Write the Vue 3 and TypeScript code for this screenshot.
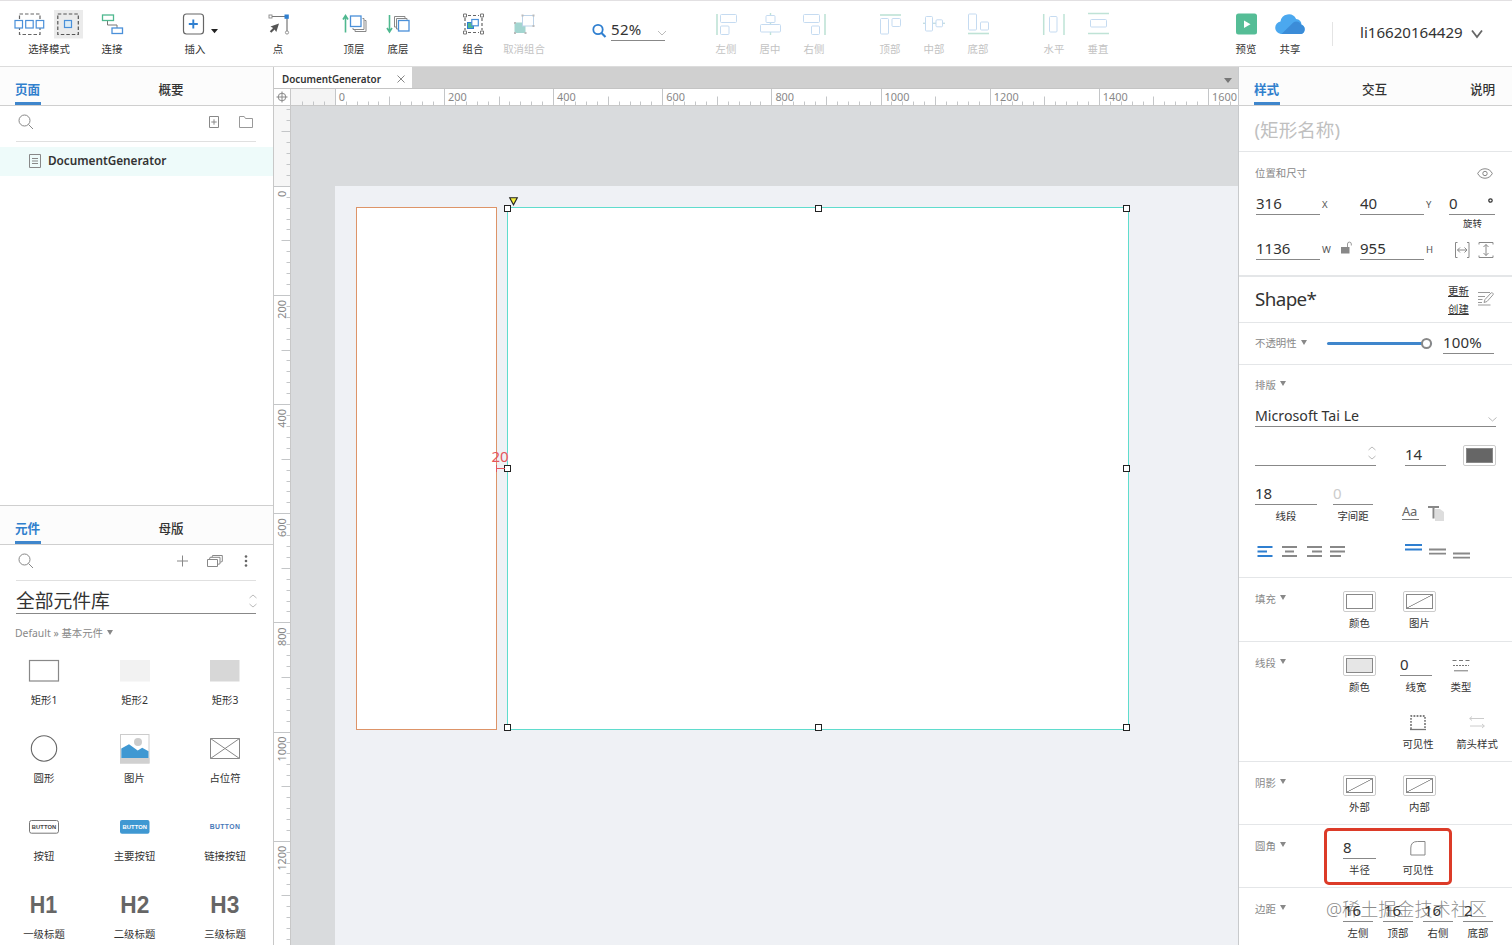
<script setup lang="ts">
interface Tool {
  label: string
  icon: string
  off?: boolean
}

const toolbar: Record<string, Tool[]> = {
  link: [
    {
      label: '连接',
      icon: '<path d="M17.5 21v4H27v3" stroke="#777"/><rect x="12.5" y="15" width="11" height="5.5" stroke="#4fb88f" stroke-width="1.3"/><rect x="22" y="28" width="10.5" height="5.5" stroke="#4a90d9" stroke-width="1.3"/>',
    },
  ],
  insert: [
    {
      label: '插入',
      icon: '<rect x="10.5" y="14" width="20" height="20" rx="3" stroke="#666" stroke-width="1.2"/><path d="M20.3 19.5v9M15.8 24h9" stroke="#2f7fd0" stroke-width="1.9"/><path d="M38 29h7l-3.500 4.300z" fill="#222"/>',
    },
  ],
  point: [
    {
      label: '点',
      icon: '<path d="M16 16.500h13M31 18v13" stroke="#777" stroke-width="1.200"/><rect x="13" y="15" width="3" height="3" stroke="#888" stroke-width=".9"/><circle cx="31" cy="32.500" r="1.600" stroke="#888" stroke-width=".9"/><rect x="28.500" y="14.500" width="4.300" height="4.300" fill="#2f7fd0"/><path d="M23 23.500l-8.500 3 2.600 1.600-3.300 3.200 1.500 1.500 3.300-3.200 1.700 2.500z" fill="#555"/>',
    },
  ],
  order: [
    {
      label: '顶层',
      icon: '<path d="M13.500 32.500V16M11 19.500l2.500-4 2.500 4" stroke="#4fb88f" stroke-width="1.600"/><path d="M30.500 18.500h1.500v11H21v-1.500M32.500 20.500H34v11H23V30" stroke="#888"/><rect x="18.500" y="16" width="10.500" height="10.500" stroke="#4a90d9" stroke-width="1.300"/>',
    },
    {
      label: '底层',
      icon: '<path d="M13.500 15v16.500M11 28l2.500 4 2.500-4" stroke="#4fb88f" stroke-width="1.600"/><path d="M20 27h-1.500V16.500H29V18M22 29h-1.500V18.500H31V20" stroke="#888"/><rect x="22.500" y="20.500" width="10.500" height="10.500" stroke="#4a90d9" stroke-width="1.300"/>',
    },
  ],
  group: [
    {
      label: '组合',
      icon: '<path d="M17 15.500h11M17 32.500h11M14 18v12M31 18v12" stroke="#666" stroke-width="1.200" stroke-dasharray="3 2"/><path d="M12.500 14h3v3h-3zM29.500 14h3v3h-3zM12.500 31h3v3h-3zM29.500 31h3v3h-3z" fill="#fff" stroke="#777"/><rect x="16.500" y="22.500" width="6" height="6" fill="#4fb88f" stroke="#2f7fd0"/><rect x="20.800" y="19.500" width="6.500" height="6.300" fill="#fff" stroke="#4a90d9" stroke-width="1.200"/>',
    },
  ],
  ungroup: [
    {
      label: '取消组合',
      off: true,
      icon: '<path d="M12.500 22.500h8v3.500h3v7h-11z" fill="#a3d5d0"/><rect x="20.500" y="15.500" width="11" height="10.500" fill="#fff" stroke="#bdd3e8"/><path d="M19.500 14.500h2v2h-2zM30.500 14.500h2v2h-2zM30.500 25h2v2h-2zM12 22h2v2h-2zM12 32h2v2h-2zM22.500 32h2v2h-2z" fill="#bbb"/>',
    },
  ],
  alignH: [
    {
      label: '左侧',
      off: true,
      icon: '<path d="M13 14v21" stroke="#bfe3d6" stroke-width="1.600"/><g stroke="#c5dbf1"><rect x="16.500" y="14.500" width="16" height="8" rx="1"/><rect x="16.500" y="26" width="8.500" height="8.500" rx="1"/></g>',
    },
    {
      label: '居中',
      off: true,
      icon: '<path d="M22.500 13v22" stroke="#bfe3d6" stroke-width="1.400"/><g stroke="#c5dbf1" fill="#fff"><rect x="18" y="15.500" width="9" height="7" rx="1"/><rect x="12.500" y="24.500" width="20" height="7.500" rx="1"/></g>',
    },
    {
      label: '右侧',
      off: true,
      icon: '<path d="M33 14v21" stroke="#bfe3d6" stroke-width="1.600"/><g stroke="#c5dbf1"><rect x="11.500" y="14.500" width="16" height="8" rx="1"/><rect x="19.500" y="26" width="8" height="8.500" rx="1"/></g>',
    },
  ],
  alignV: [
    {
      label: '顶部',
      off: true,
      icon: '<path d="M12 15h21" stroke="#bfe3d6" stroke-width="1.600"/><g stroke="#c5dbf1"><rect x="12.500" y="18.500" width="8" height="15.500" rx="1"/><rect x="24" y="18.500" width="8.500" height="8" rx="1"/></g>',
    },
    {
      label: '中部',
      off: true,
      icon: '<path d="M11 23.300h22" stroke="#c5dfe3" stroke-width="1.400"/><g stroke="#c5dbf1" fill="#fff"><rect x="13.500" y="16.500" width="7" height="14.500" rx="1"/><rect x="24" y="19.800" width="6.500" height="7" rx="1"/></g>',
    },
    {
      label: '底部',
      off: true,
      icon: '<path d="M12 33.500h21" stroke="#bfe3d6" stroke-width="1.600"/><g stroke="#c5dbf1"><rect x="12.500" y="14" width="8" height="16" rx="1"/><rect x="24.500" y="22" width="8" height="8" rx="1"/></g>',
    },
  ],
  spread: [
    {
      label: '水平',
      off: true,
      icon: '<path d="M11.700 14v21M32 14v21" stroke="#bfe3d6" stroke-width="1.500"/><rect x="17.500" y="16.500" width="7.500" height="15.500" rx="1" stroke="#c5dbf1"/>',
    },
    {
      label: '垂直',
      off: true,
      icon: '<path d="M12 13.500h21M12 33.500h21" stroke="#bfe3d6" stroke-width="1.500"/><rect x="14.500" y="19.500" width="16" height="7.500" rx="1" stroke="#c5dbf1"/>',
    },
  ],
}

const shareTools: Tool[] = [
  {
    label: '预览',
    icon: '<rect x="12" y="13.500" width="21" height="21" rx="2.500" fill="#55bd96"/><path d="M20 20.500v7.500l6.500-3.750z" fill="#fff"/>',
  },
  {
    label: '共享',
    icon: '<path d="M13 34a6.300 6.300 0 0 1-.5-12.500 8.300 8.300 0 0 1 15.600-2.600 6 6 0 0 1 5.400 5.600A5 5 0 0 1 33 34z" fill="#4ba8ef"/><path d="M13.500 34l11.800-11.600a5.500 5.500 0 0 1 8.200 2.600A4.700 4.700 0 0 1 33 34z" fill="#3b8cd8"/>',
  },
]

const widgets: { label: string; icon: string }[] = [
  { label: '矩形1', icon: '<rect x="29.500" y="10.500" width="29" height="20.500" stroke="#888" stroke-width="1.200"/>' },
  { label: '矩形2', icon: '<rect x="29" y="10" width="30" height="21.500" fill="#f2f2f2"/>' },
  { label: '矩形3', icon: '<rect x="29" y="10" width="29.500" height="21.500" fill="#d7d7d7"/>' },
  { label: '圆形', icon: '<circle cx="44" cy="20.500" r="12.700" stroke="#666" stroke-width="1.100"/>' },
  {
    label: '图片',
    icon: '<rect x="29.500" y="6.500" width="28.500" height="28.500" fill="#fff" stroke="#ccc"/><path d="M29 30h29.500v5.500H29z" fill="#d0d0d0"/><circle cx="47" cy="14" r="4" fill="#ccc"/><path d="M30.300 30V20.500l7.700-4.300 8.700 6.300 4.500-2.700 6.300 3.500V30z" fill="#3f98d2"/>',
  },
  { label: '占位符', icon: '<path d="M29.500 10.500h29v20h-29zM29.500 10.500l29 20M58.500 10.500l-29 20" stroke="#888"/>' },
  {
    label: '按钮',
    icon: '<rect x="29.500" y="14.500" width="29" height="12.700" rx="2" stroke="#777"/><text x="44" y="23" font-size="5.800" font-weight="700" fill="#444" textLength="24.500">BUTTON</text>',
  },
  {
    label: '主要按钮',
    icon: '<rect x="29" y="14" width="29.500" height="13.700" rx="2" fill="#3f98d2"/><text x="43.700" y="23" font-size="5.800" font-weight="700" fill="#fff" textLength="24.500">BUTTON</text>',
  },
  { label: '链接按钮', icon: '<text x="43.800" y="22.500" font-size="6.800" font-weight="700" fill="#4878b8" textLength="30">BUTTON</text>' },
  { label: '一级标题', icon: '<text x="43.500" y="28.500" font-size="24.500" font-weight="700" fill="#666" textLength="27.500" lengthAdjust="spacingAndGlyphs">H1</text>' },
  { label: '二级标题', icon: '<text x="43.800" y="28.500" font-size="24.500" font-weight="700" fill="#666" textLength="29" lengthAdjust="spacingAndGlyphs">H2</text>' },
  { label: '三级标题', icon: '<text x="43.800" y="28.500" font-size="24.500" font-weight="700" fill="#666" textLength="29" lengthAdjust="spacingAndGlyphs">H3</text>' },
]

// 200 canvas units at the 52% zoom level
const SPAN = 109.15

interface Tick {
  at: number
  size: number
}

function ticks(origin: number, length: number): Tick[] {
  const list: Tick[] = []
  for (let i = -9; i < 100; i++) {
    const at = Math.floor(origin + (i * SPAN) / 10) + 0.5
    if (at < 1 || at > length) continue
    list.push({ at, size: i % 10 === 0 ? 17 : i % 5 === 0 ? 9 : 4 })
  }
  return list
}

function marks(origin: number, count: number) {
  return Array.from({ length: count }, (_, i) => ({ at: origin + i * SPAN, text: String(i * 200) }))
}

const hTicks = ticks(44.3, 947)
const hMarks = marks(44.3, 9)
const vTicks = ticks(80.3, 839)
const vMarks = marks(80.3, 7)

const handles = ['nw', 'n', 'ne', 'w', 'e', 'sw', 's', 'se']

const margins = [
  { value: '16', label: '左侧' },
  { value: '16', label: '顶部' },
  { value: '16', label: '右侧' },
  { value: '2', label: '底部' },
]
</script>

<template>
  <div class="app">
    <header class="toolbar">
      <div class="tool mode">
        <svg width="76" height="30" viewBox="0 9 76 30" fill="none">
          <rect x="43" y="10" width="29" height="28.500" fill="#ebebeb" />
          <rect x="8.500" y="14" width="20.500" height="20.500" stroke="#666" stroke-width="1.200" stroke-dasharray="3.500 2" />
          <g fill="#fff" stroke="#4a90d9" stroke-width="1.200">
            <rect x="4" y="20.500" width="7.500" height="7.500" />
            <rect x="14.700" y="20.500" width="7.500" height="7.500" />
            <rect x="25.200" y="20.500" width="7.500" height="7.500" />
          </g>
          <rect x="46.800" y="14" width="20.500" height="20.500" stroke="#555" stroke-width="1.200" stroke-dasharray="3.500 2" />
          <rect x="53.500" y="20.500" width="7" height="7" stroke="#4a90d9" stroke-width="1.200" fill="#dcecf5" />
        </svg>
        <span>选择模式</span>
      </div>
      <template v-for="(tools, name) in toolbar" :key="name">
        <div v-if="name === 'alignH'" class="zoom">
          <svg width="16" height="16" viewBox="0 0 16 16" fill="none" stroke="#2f7fd0" stroke-width="1.800">
            <circle cx="6" cy="7.500" r="4.700" />
            <path d="M9.500 11l4 4" stroke-width="2.200" />
          </svg>
          <div class="zoom-value">
            <span>52%</span>
            <svg width="10" height="6" viewBox="0 0 10 6" fill="none" stroke="#bbb"><path d="M1 1l4 4 4-4" /></svg>
          </div>
        </div>
        <div class="tool-group" :class="name">
          <div v-for="t in tools" :key="t.label" class="tool" :class="{ off: t.off }">
            <svg width="44" height="30" viewBox="0 9 44 30" fill="none" v-html="t.icon" />
            <span>{{ t.label }}</span>
          </div>
        </div>
      </template>
      <div class="tool-group share">
        <div v-for="t in shareTools" :key="t.label" class="tool">
          <svg width="44" height="30" viewBox="0 9 44 30" fill="none" v-html="t.icon" />
          <span>{{ t.label }}</span>
        </div>
      </div>
      <div class="account">
        <span>li16620164429</span>
        <svg width="12" height="10" viewBox="0 0 12 10" fill="none" stroke="#666" stroke-width="1.800"><path d="M1 1.500l5 6.500 5-6.500" /></svg>
      </div>
    </header>

    <div class="body">
      <aside class="left">
        <section class="pages">
          <nav class="tabs">
            <span class="active">页面</span>
            <span>概要</span>
          </nav>
          <div class="searchbar">
            <svg width="16" height="16" viewBox="0 0 16 16" fill="none" stroke="#888"><circle cx="6.500" cy="6.500" r="5.500" /><path d="M10.500 10.500l4.500 4.500" /></svg>
            <i class="grow" />
            <svg width="10" height="12" viewBox="0 0 10 12" fill="none" stroke="#888"><path d="M.5.5h9v11h-9zM5 3.300v5.400M2.300 6h5.400" /></svg>
            <svg class="folder" width="14" height="12" viewBox="0 0 14 12" fill="none" stroke="#999"><path d="M.5 11.500V.5h4.700l1.300 2h7v9z" /></svg>
          </div>
          <div class="page-row">
            <svg width="12" height="14" viewBox="0 0 12 14" fill="none" stroke="#888"><path d="M.5.500h11v13H.5zM3 4.500h6M3 7h6M3 9.500h6" /></svg>
            <b>DocumentGenerator</b>
          </div>
        </section>
        <section class="library">
          <nav class="tabs">
            <span class="active">元件</span>
            <span>母版</span>
          </nav>
          <div class="searchbar">
            <svg width="16" height="16" viewBox="0 0 16 16" fill="none" stroke="#888"><circle cx="6.500" cy="6.500" r="5.500" /><path d="M10.500 10.500l4.500 4.500" /></svg>
            <i class="grow" />
            <svg width="12" height="12" viewBox="0 0 12 12" stroke="#888"><path d="M6.500 .5v11M1 6h11" /></svg>
            <svg class="stack" width="16" height="12" viewBox="0 0 16 12" fill="none" stroke="#888"><path d="M.5 4.500h10v7H.5zM2.500 4.300l.5-2h10v6.500l-2 .5M5 2.200l.5-1.700h9.800v6l-2 .7" /></svg>
            <svg class="dots" width="4" height="12" viewBox="0 0 4 12" fill="#666"><circle cx="2" cy="1.500" r="1.300" /><circle cx="2" cy="6" r="1.300" /><circle cx="2" cy="10.500" r="1.300" /></svg>
          </div>
          <div class="lib-select">
            <span>全部元件库</span>
            <svg width="8" height="14" viewBox="0 0 8 14" fill="none" stroke="#bbb"><path d="M.5 4L4 1l3.500 3M.5 10L4 13l3.500-3" /></svg>
          </div>
          <div class="crumb">Default » 基本元件<i class="tri" /></div>
          <div class="widgets">
            <div v-for="w in widgets" :key="w.label" class="widget">
              <svg width="88" height="40" viewBox="0 0 88 40" fill="none" text-anchor="middle" font-family="Liberation Sans, Arial, sans-serif" v-html="w.icon" />
              <span>{{ w.label }}</span>
            </div>
          </div>
        </section>
      </aside>

      <main class="center">
        <div class="doc-tabs">
          <div class="doc-tab">
            <b>DocumentGenerator</b>
            <svg width="8" height="8" viewBox="0 0 8 8" stroke="#888"><path d="M.5.5l7 7M7.500.5l-7 7" /></svg>
          </div>
          <i class="doc-menu" />
        </div>
        <div class="workspace">
          <svg class="corner" width="17" height="17" fill="none" stroke="#888"><circle cx="8" cy="8" r="3.800" /><path d="M8 2.500v11M2.500 8h11" /></svg>
          <svg class="ruler-h" width="947" height="17">
            <rect width="44" height="17" fill="#f4f4f4" />
            <path v-for="t in hTicks" :key="t.at" :d="`M${t.at} ${16.5 - t.size}V16.500`" stroke="#c4c6c8" />
            <text v-for="m in hMarks" :key="m.text" :x="m.at + 3.500" y="12">{{ m.text }}</text>
          </svg>
          <svg class="ruler-v" width="17" height="839">
            <rect width="17" height="80" fill="#f6f6f6" />
            <path v-for="t in vTicks" :key="t.at" :d="`M${16.5 - t.size} ${t.at}H16.500`" stroke="#c4c6c8" />
            <text v-for="m in vMarks" :key="m.text" :transform="`translate(12 ${m.at + 4.500}) rotate(-90)`" text-anchor="end">{{ m.text }}</text>
          </svg>
          <div class="canvas">
            <div class="artboard">
              <div class="shape side" />
              <div class="shape selected">
                <i v-for="h in handles" :key="h" class="handle" :class="h" />
                <svg class="corner-grip" width="9" height="9" viewBox="0 0 9 9"><path d="M.7.8h7.600L4.500 7.800z" fill="#f3ee3c" stroke="#222" stroke-width="1.100" /></svg>
                <span class="distance">20</span>
                <i class="gauge" />
              </div>
            </div>
          </div>
        </div>
      </main>

      <aside class="right">
        <nav class="tabs">
          <span class="active">样式</span>
          <span>交互</span>
          <span>说明</span>
        </nav>
        <div class="shape-name">(矩形名称)</div>

        <section class="geometry">
          <div class="head">
            <span class="caption">位置和尺寸</span>
            <svg width="16" height="11" viewBox="0 0 16 11" fill="none" stroke="#888"><path d="M.7 5.500C3.500-.8 12.500-.8 15.300 5.500 12.500 11.800 3.500 11.800.7 5.500z" /><circle cx="8" cy="5.500" r="2.200" /></svg>
          </div>
          <div class="geo-row">
            <div class="value">316</div>
            <span class="axis">X</span>
            <div class="value">40</div>
            <span class="axis">Y</span>
            <div class="value rot"><span>0</span><svg width="5" height="5" viewBox="0 0 5 5" fill="none" stroke="#333" stroke-width="1.200"><circle cx="2.500" cy="2.500" r="1.700" /></svg></div>
          </div>
          <div class="rot-label">旋转</div>
          <div class="geo-row">
            <div class="value">1136</div>
            <span class="axis">W
              <svg class="lock" width="11" height="13" viewBox="0 0 11 13" fill="none"><rect y="6" width="8.500" height="6.500" fill="#888" /><path d="M6.500 6V3a1.900 1.900 0 0 1 3.800 0v1.500" stroke="#999" /></svg>
            </span>
            <div class="value">955</div>
            <span class="axis">H</span>
            <svg class="fit" width="42" height="16" viewBox="0 0 42 16" fill="none" stroke="#888"><path d="M3.500.5h-2v15h2M13 .5h2v15h-2M3.500 8h9.500M6 5.500L3.500 8 6 10.500M10.500 5.500L13 8l-2.500 2.500M25 2.500V.5h14v2M25 13.500v2h14v-2M32 2.500v11M29.500 5L32 2.500 34.500 5M29.500 11l2.500 2.500 2.500-2.500" /></svg>
          </div>
        </section>

        <section class="style-name">
          <span class="style-title">Shape*</span>
          <div class="links"><u>更新</u><u>创建</u></div>
          <svg width="16" height="15" viewBox="0 0 16 15" fill="none" stroke="#999"><path d="M0 1.500h12M0 5.500h7M0 8.500h4.500M0 11.500h4M0 14h12.500M6 11.500l1-3 6-6.500c1-1 3 .7 2 1.800L9 10.500z" /></svg>
        </section>

        <section class="opacity">
          <span class="caption">不透明性<i class="tri" /></span>
          <div class="slider"><i /></div>
          <div class="value">100%</div>
        </section>

        <section class="typography">
          <span class="caption">排版<i class="tri" /></span>
          <div class="value font-family">
            <span>Microsoft Tai Le</span>
            <svg width="9" height="5" viewBox="0 0 9 5" fill="none" stroke="#bbb"><path d="M.5.5l4 3.500 4-3.500" /></svg>
          </div>
          <div class="font-row">
            <div class="value weight">
              <svg width="8" height="14" viewBox="0 0 8 14" fill="none" stroke="#bbb"><path d="M.5 4L4 1l3.500 3M.5 10L4 13l3.500-3" /></svg>
            </div>
            <div class="value size">14</div>
            <div class="swatch dark"><i /></div>
          </div>
          <div class="spacing-row">
            <div class="field line"><div class="value">18</div><span>线段</span></div>
            <div class="field char"><div class="value">0</div><span>字间距</span></div>
            <span class="aa">Aa</span>
            <svg width="16" height="16" viewBox="0 0 16 16"><path d="M7 4h5l4 3v9H7z" fill="#ddd" /><path d="M0 2h11M5.500 2v11.500" stroke="#888" stroke-width="2" /></svg>
          </div>
          <svg class="align-row" width="241" height="20" viewBox="0 0 241 20" fill="none" stroke="#888" stroke-width="1.800">
            <path d="M2.500 6h15M2.500 10.500h9.500M2.500 15h15" stroke="#2f7fd0" />
            <path d="M27 6h15M30 10.500h9M27 15h15M52 6h15M57 10.500H67M52 15h15M75 6h15M75 10.500h15M75 15h11" />
            <path d="M150 4h17M150 8.500h17" stroke="#2f7fd0" />
            <path d="M174 8.500h17M174 12.700h17M198 12.500h17M198 16.700h17" />
          </svg>
        </section>

        <section class="props fill">
          <span class="caption">填充<i class="tri" /></span>
          <div class="cell"><div class="swatch"><i /></div><span>颜色</span></div>
          <div class="cell"><div class="swatch none"><i /></div><span>图片</span></div>
        </section>

        <section class="props stroke">
          <span class="caption">线段<i class="tri" /></span>
          <div>
            <div class="cells">
              <div class="cell"><div class="swatch light"><i /></div><span>颜色</span></div>
              <div class="cell width"><div class="value">0</div><span>线宽</span></div>
              <div class="cell kind">
                <svg width="18" height="21" viewBox="0 0 18 21" stroke="#777"><path d="M.5 5.500h17" stroke-dasharray="4 2.500" /><path d="M1 10.500h16" stroke-dasharray="2 1" /><path d="M2 15.800h14" /></svg>
                <span>类型</span>
              </div>
            </div>
            <div class="cells second">
              <div class="cell vis">
                <svg width="18" height="21" viewBox="0 0 18 21" fill="none" stroke="#555" stroke-width="1.300"><path d="M2 17V4h14v13" stroke-dasharray="1.800 1.300" /><path d="M1 17.500h16" stroke="#777" /></svg>
                <span>可见性</span>
              </div>
              <div class="cell arrows">
                <svg width="16" height="21" viewBox="0 0 16 21" fill="none" stroke="#ccc"><path d="M3 4.500L.7 6.500 3 8.500M.7 6.500H15M13 12l2.300 2-2.300 2M15.300 14H1" /></svg>
                <span>箭头样式</span>
              </div>
            </div>
          </div>
        </section>

        <section class="props shadow">
          <span class="caption">阴影<i class="tri" /></span>
          <div class="cell"><div class="swatch none"><i /></div><span>外部</span></div>
          <div class="cell"><div class="swatch none"><i /></div><span>内部</span></div>
        </section>

        <section class="props radius">
          <span class="caption">圆角<i class="tri" /></span>
          <div class="cell"><div class="value">8</div><span>半径</span></div>
          <div class="cell round-vis">
            <svg width="16" height="21" viewBox="0 0 16 21" fill="none" stroke="#888"><path d="M15 3.500v13.500H.8v-7q0-6.500 6.500-6.500z" /></svg>
            <span>可见性</span>
          </div>
          <i class="callout" />
        </section>

        <section class="props margins">
          <span class="caption">边距<i class="tri" /></span>
          <div v-for="m in margins" :key="m.label" class="cell"><div class="value">{{ m.value }}</div><span>{{ m.label }}</span></div>
          <span class="watermark">@稀土掘金技术社区</span>
        </section>
      </aside>
    </div>
  </div>
</template>

<style>
body {
  overflow: hidden;
}
</style>

<style scoped>
.app,
.app * {
  box-sizing: border-box;
}
.app {
  width: 1512px;
  height: 945px;
  display: flex;
  flex-direction: column;
  overflow: hidden;
  background: #fff;
  color: #333;
  font-family: "Noto Sans", "Noto Sans CJK SC", sans-serif;
  font-size: 10.4px;
  line-height: 14px;
}
svg {
  display: block;
  flex: none;
  overflow: visible;
}
i {
  display: block;
  flex: none;
}

/* toolbar */
.toolbar {
  height: 67px;
  flex: none;
  display: flex;
  border-top: 1px solid #e2e0e2;
  border-bottom: 1px solid #dcdcdc;
  padding-top: 8px;
}
.tool-group {
  display: flex;
}
.tool {
  width: 44px;
  display: flex;
  flex-direction: column;
  align-items: center;
  gap: 3px;
  white-space: nowrap;
}
.tool.off {
  color: #c3c3c3;
}
.mode {
  width: 76px;
  margin-left: 11px;
}
.link { margin-left: 3px; }
.insert { margin-left: 39px; }
.point { margin-left: 39px; }
.order { margin-left: 32px; }
.group { margin-left: 31px; }
.ungroup { margin-left: 7px; }
.alignH { margin-left: 38px; }
.alignV,
.spread { margin-left: 32px; }
.tool-group.share { margin-left: 104px; }
.zoom {
  display: flex;
  width: 74px;
  height: 32px;
  margin-left: 46px;
  padding-top: 13px;
  gap: 3px;
}
.zoom-value {
  width: 54px;
  height: 19px;
  display: flex;
  align-items: center;
  justify-content: space-between;
  border-bottom: 1px solid #888;
  font-size: 15px;
  line-height: 16px;
  letter-spacing: 0.3px;
}
.zoom-value span {
  margin-top: -4px;
}
.zoom-value svg {
  margin-top: 4px;
  margin-right: -2px;
}
.account {
  display: flex;
  align-items: center;
  height: 24px;
  margin: 13px 0 0 20px;
  padding-left: 27px;
  border-left: 1px solid #e4e4e4;
  gap: 8px;
  font-size: 15.1px;
}
.account span {
  margin-top: -5px;
}

.body {
  flex: 1;
  min-height: 0;
  display: flex;
}

/* shared tab strip */
.tabs {
  display: flex;
  height: 39px;
  flex: none;
  border-bottom: 1px solid #cfcfcf;
  background: #fcfcfc;
  padding-left: 15px;
  font-size: 12.6px;
  line-height: 46px;
  font-weight: 500;
}
.tabs span {
  height: 38px;
  width: 26px;
  white-space: nowrap;
}
.tabs .active {
  color: #3180cd;
  font-weight: 700;
  border-bottom: 3px solid #3f86cc;
}

/* left panel */
.left {
  width: 274px;
  flex: none;
  display: flex;
  flex-direction: column;
  border-right: 1px solid #c8c8c8;
}
.left .tabs span + span {
  margin-left: 117.500px;
}
.pages {
  height: 438px;
  flex: none;
}
.library {
  border-top: 1px solid #cfcfcf;
}
.searchbar {
  height: 36px;
  margin: 0 17px 0 16px;
  padding: 0 2px 3px;
  display: flex;
  align-items: center;
  border-bottom: 1px solid #e0e0e0;
}
.grow {
  flex: 1;
}
.folder { margin-left: 20px; margin-right: 1px; }
.stack { margin-left: 19px; }
.dots { margin-left: 21px; margin-right: 6px; }
.page-row {
  height: 29px;
  margin-top: 5px;
  padding-left: 29px;
  background: #eefbfa;
  display: flex;
  align-items: center;
  gap: 7px;
}
.page-row svg {
  margin-top: -1px;
}
.page-row b {
  font-size: 11.8px;
  margin-top: -4px;
  font-weight: 600;
  letter-spacing: -0.03px;
}
.lib-select {
  height: 33px;
  margin: 0 17px 0 16px;
  display: flex;
  align-items: center;
  justify-content: space-between;
  border-bottom: 1px solid #888;
  font-size: 18.8px;
  line-height: 24px;
  padding-top: 8px;
}
.lib-select svg {
  margin-right: -1px;
}
.crumb {
  margin: 12px 0 0 15px;
  height: 14px;
  color: #888;
  display: flex;
}
.tri {
  display: inline-block;
  border: 3px solid transparent;
  border-top: 5px solid #888;
  border-bottom: 0;
  margin: 4px 0 0 4px;
}
.widgets {
  margin-top: 10px;
  display: grid;
  grid-template-columns: 88px 88px 88px;
  column-gap: 2.500px;
  grid-auto-rows: 78px;
}
.widget {
  display: flex;
  flex-direction: column;
  align-items: center;
  gap: 3px;
}

/* canvas */
.center {
  width: 964px;
  flex: none;
  display: flex;
  flex-direction: column;
}
.doc-tabs {
  height: 22px;
  flex: none;
  display: flex;
  justify-content: space-between;
  background: #d0d0d0;
  border-bottom: 1px solid #c4c4c4;
}
.doc-tab {
  width: 138px;
  display: flex;
  align-items: center;
  justify-content: space-between;
  padding: 2px 7px 0 8px;
  background: #fff;
}
.doc-tab b {
  font-size: 9.9px;
  font-weight: 600;
  letter-spacing: -0.03px;
}
.doc-menu {
  margin: 11px 6px 0 0;
  height: 5px;
  border: 4.500px solid transparent;
  border-top: 5px solid #777;
  border-bottom: 0;
}
.workspace {
  flex: 1;
  display: grid;
  grid-template-columns: 17px 947px;
  grid-template-rows: 17px 839px;
}
.corner,
.ruler-h,
.ruler-v {
  overflow: hidden;
  background: #fff;
}
.corner,
.ruler-h {
  border-bottom: 1px solid #c8c8c8;
}
.corner,
.ruler-v {
  border-right: 1px solid #c8c8c8;
}
.ruler-h text,
.ruler-v text {
  font-size: 10.9px;
  fill: #888;
}
.canvas {
  background: #d9dbdd;
  padding: 80px 0 0 44px;
}
.artboard {
  height: 759px;
  background: #eff1f5;
  display: flex;
  align-items: flex-start;
  padding: 21px 0 0 21px;
  gap: 10px;
}
.shape {
  height: 523px;
  background: #fff;
  border: 1px solid #dd9468;
  flex: none;
}
.side {
  width: 141px;
}
.selected {
  width: 622px;
  border-color: #5fdccd;
  position: relative;
}
.handle {
  position: absolute;
  width: 7px;
  height: 7px;
  border: 1px solid #222;
  background: #fff;
}
.nw, .n, .ne { top: -3px; }
.w, .e { top: 257px; }
.sw, .s, .se { bottom: -2px; }
.nw, .w, .sw { left: -4px; }
.n, .s { left: 307px; }
.ne, .e, .se { right: -2px; }
.corner-grip {
  position: absolute;
  left: 1px;
  top: -11px;
}
.distance {
  position: absolute;
  left: -16.500px;
  top: 240px;
  width: 20px;
  font-size: 15px;
  line-height: 16px;
  color: #e5555c;
}
.gauge {
  position: absolute;
  left: -12px;
  top: 260px;
  width: 9px;
  height: 1px;
  background: #e5555c;
}
.gauge::before {
  content: "";
  position: absolute;
  left: 0;
  top: -3px;
  width: 1px;
  height: 7px;
  background: #e5555c;
}

/* inspector */
.right {
  width: 274px;
  flex: none;
  border-left: 1px solid #c8cacc;
  overflow: hidden;
  position: relative;
}
.right .tabs span + span {
  margin-left: 82px;
}
.shape-name {
  height: 46px;
  padding-left: 15.500px;
  border-bottom: 1px solid #e4e6e8;
  color: #c0c0c0;
  font-size: 18.600px;
  line-height: 48px;
}
.right section {
  padding-left: 16px;
  border-bottom: 1px solid #e4e6e8;
}
.caption {
  color: #888;
  line-height: 20px;
  white-space: nowrap;
  display: flex;
}
.caption .tri {
  margin-top: 6px;
}
.value {
  height: 21px;
  border-bottom: 1px solid #888;
  font-size: 15px;
  line-height: 19px;
}
.right section.geometry {
  height: 125px;
  padding-left: 17px;
  border-bottom: 2px solid #e4e6e8;
}
.head {
  display: flex;
  justify-content: space-between;
  align-items: center;
  padding: 11px 19px 0 0;
  margin-left: -1px;
}
.geo-row {
  display: grid;
  grid-template-columns: 64px 40px 64px 25px 46px;
  margin-top: 10px;
  height: 22px;
}
.geo-row .value {
  height: 22px;
  line-height: 21px;
}
.rot {
  display: flex;
  justify-content: space-between;
}
.rot svg {
  margin: 5px 2px 0 0;
}
.axis {
  display: flex;
  align-items: center;
  padding: 1px 0 0 2px;
  font-size: 9.5px;
  color: #555;
}
.lock {
  margin: -5px 0 0 10px;
}
.fit {
  margin: 4px 0 0 5px;
}
.rot-label {
  margin: 3px 0 0 193.500px;
  width: 46px;
  text-align: center;
  font-size: 9.400px;
  line-height: 12px;
}
.rot-label + .geo-row {
  margin-top: 8px;
}
.right section.style-name {
  height: 46px;
  display: flex;
}
.style-title {
  width: 193px;
  font-size: 18.800px;
  line-height: 44px;
  letter-spacing: -0.600px;
}
.links {
  width: 30px;
  display: flex;
  flex-direction: column;
  padding-top: 5px;
  line-height: 18px;
}
.style-name svg {
  margin-top: 14px;
}
.right section.opacity {
  height: 42px;
  display: flex;
}
.opacity .caption {
  width: 72px;
  padding-top: 10px;
}
.opacity .tri {
  margin-top: 7px;
}
.slider {
  width: 105px;
  height: 3px;
  margin: 19px 11px 0 0;
  background: #3f86cc;
  border-radius: 2px;
}
.slider i {
  width: 11px;
  height: 11px;
  margin: -4px 0 0 auto;
  border: 2px solid #888;
  border-radius: 50%;
  background: #fff;
}
.opacity .value {
  width: 51px;
  margin-top: 10px;
  letter-spacing: 0.150px;
}
.right section.typography {
  height: 213px;
  padding-top: 10px;
}
.font-family {
  width: 241px;
  height: 22px;
  margin-top: 10px;
  display: flex;
  justify-content: space-between;
  align-items: center;
  font-size: 14.200px;
}
.font-family svg {
  margin-top: 8px;
  margin-right: -1px;
}
.font-family span {
  margin-top: 0;
}
.font-row {
  display: flex;
  margin-top: 17px;
}
.font-row .value,
.field .value {
  height: 22px;
  line-height: 21px;
}
.weight {
  width: 121px;
  display: flex;
  justify-content: flex-end;
  padding-top: 2px;
}
.size {
  width: 41px;
  margin: 0 17px 0 29px;
}
.font-row .swatch {
  margin-top: 1px;
}
.swatch {
  width: 33px;
  height: 21px;
  padding: 2px;
  border: 1px solid #ccc;
  border-radius: 2px;
}
.swatch i {
  width: 27px;
  height: 15px;
  border: 1px solid #888;
}
.dark i {
  background: #666;
}
.light i {
  background: #e6e6e6;
}
.none i {
  background: linear-gradient(to bottom right, transparent 47%, #999 49%, #999 51%, transparent 53%);
}
.spacing-row {
  height: 40px;
  display: flex;
  margin-top: 17px;
}
.field {
  text-align: center;
}
.field .value {
  margin-bottom: 4px;
  text-align: left;
}
.line { width: 62px; }
.char { width: 40px; margin: 0 29px 0 16px; }
.char .value { color: #ccc; }
.aa {
  width: 17px;
  height: 16px;
  margin: 21px 9px 0 0;
  border-bottom: 1px solid #777;
  font-size: 13px;
  letter-spacing: -0.200px;
  color: #666;
}
.spacing-row > svg {
  margin-top: 22px;
}
.align-row {
  margin-top: 18px;
}
.right section.props {
  height: 63px;
  display: flex;
  padding-top: 11px;
}
.right section.fill {
  height: 64px;
}
.right section.stroke {
  height: 120px;
}
.props .caption {
  width: 88px;
  flex: none;
}
.cells {
  display: flex;
}
.cell {
  width: 33px;
  margin: 2px 27px 0 0;
  height: 39px;
  display: flex;
  flex-direction: column;
  align-items: center;
  gap: 4px;
  white-space: nowrap;
}
.cell .value {
  align-self: stretch;
}
.cell.width { width: 32px; margin-left: -3px; margin-right: 20px; }
.kind { width: 18px; }
.second { margin-top: 16px; padding-left: 66px; }
.vis { width: 18px; margin-right: 42px; }
.arrows { width: 16px; }
.round-vis { width: 30px; }
.radius,
.margins {
  position: relative;
}
.callout {
  position: absolute;
  left: 85px;
  top: 3px;
  width: 128px;
  height: 57px;
  border: 3px solid #dc3b28;
  border-radius: 5px;
}
.right section.margins {
  border-bottom: 0;
}
.margins .cell {
  position: relative;
  z-index: 1;
  width: 30px;
  margin-right: 10px;
}
.margins .value {
  padding-left: 1px;
}
.watermark {
  position: absolute;
  left: 87px;
  top: 8px;
  font-size: 18.100px;
  line-height: 26px;
  font-weight: 300;
  color: rgba(110, 110, 110, 0.8);
  white-space: nowrap;
}
</style>
